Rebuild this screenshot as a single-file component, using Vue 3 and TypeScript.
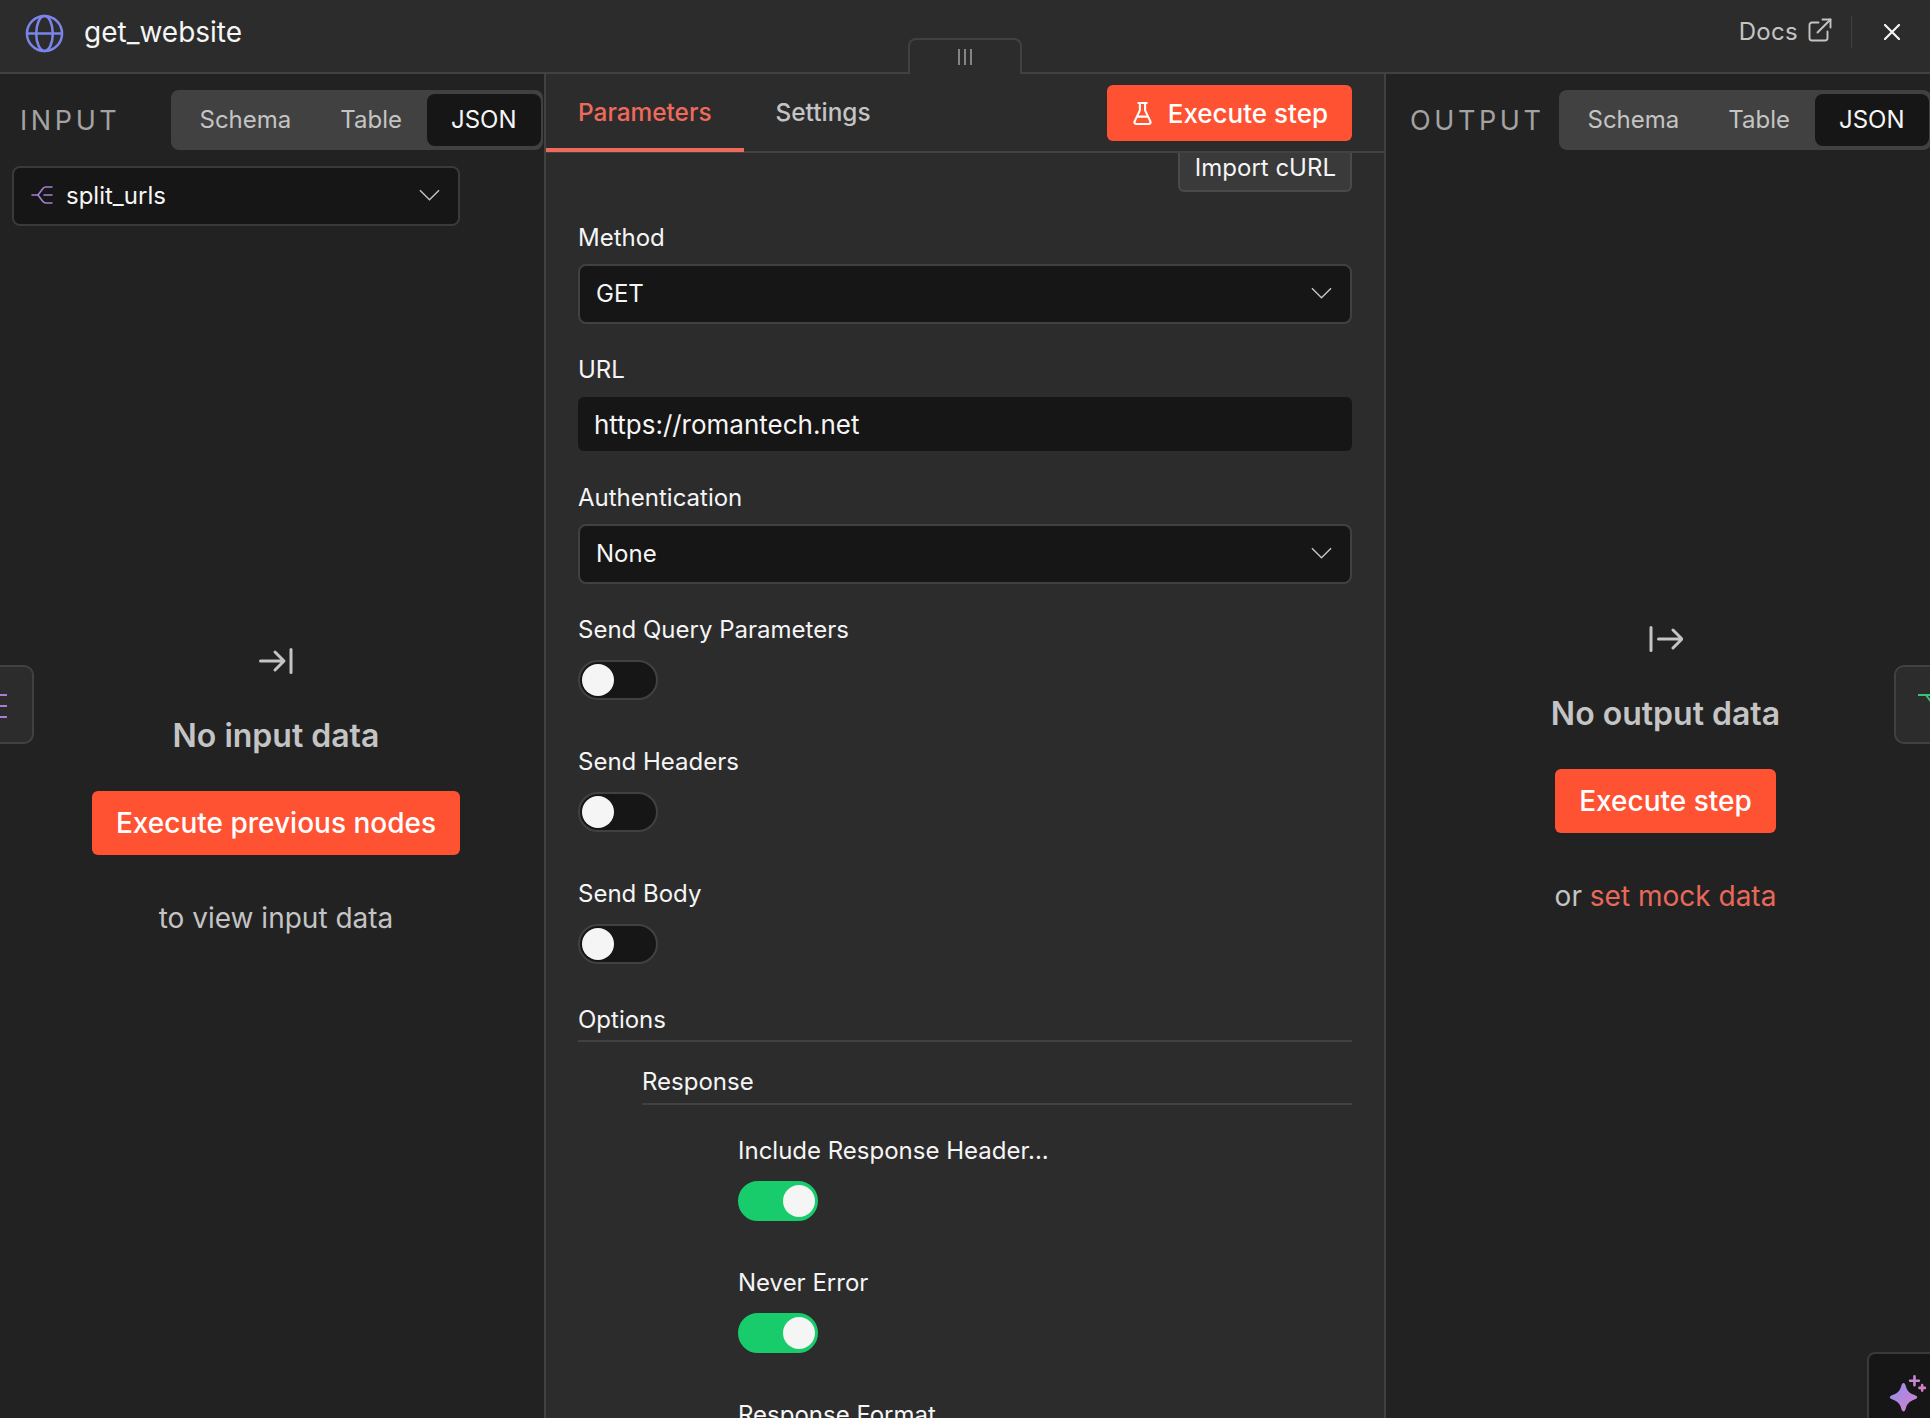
<script setup lang="ts">
const viewTabs = ['Schema', 'Table', 'JSON']

type Toggle = { label: string; on: boolean }

const topToggles: Toggle[] = [
  { label: 'Send Query Parameters', on: false },
  { label: 'Send Headers', on: false },
  { label: 'Send Body', on: false }
]

const responseToggles: Toggle[] = [
  { label: 'Include Response Header...', on: true },
  { label: 'Never Error', on: true }
]
</script>

<template>
  <div class="ndv">
    <header class="topbar">
      <svg class="globe" viewBox="0 0 40 40" fill="none" stroke="#7b84e8" stroke-width="2.6">
        <circle cx="20" cy="20" r="18" />
        <ellipse cx="20" cy="20" rx="8.5" ry="18" />
        <path d="M2 20h36" />
      </svg>
      <span class="node-name">get_website</span>
      <span class="docs">Docs</span>
      <svg class="external" viewBox="0 0 24 24" fill="none" stroke="#c4c4c4" stroke-width="1.9" stroke-linecap="round" stroke-linejoin="round">
        <path d="M10.5 4.5H4a2.5 2.5 0 0 0-2.500 2.500v13A2.500 2.500 0 0 0 4 22.500h13a2.500 2.500 0 0 0 2.500-2.500v-6.500" />
        <path d="M14.500 1.500h8v8" />
        <path d="M22.500 1.500 9.500 14.500" />
      </svg>
      <span class="divider"></span>
      <svg class="close" viewBox="0 0 16 16" fill="none" stroke="#f5f5f5" stroke-width="2.200" stroke-linecap="round">
        <path d="M1 1l14 14M15 1 1 15" />
      </svg>
    </header>

    <div class="handle">
      <svg viewBox="0 0 16 16" fill="none" stroke="#a3a3a3" stroke-width="1.500">
        <path d="M2 0v16M8 0v16M14 0v16" />
      </svg>
    </div>

    <main class="panels">
      <section class="side input">
        <div class="side-head">
          <span class="side-title">INPUT</span>
          <div class="view-tabs">
            <span v-for="tab in viewTabs" :key="tab" class="view-tab" :class="{ active: tab === 'JSON' }">{{ tab }}</span>
          </div>
        </div>
        <div class="node-select">
          <svg class="split-icon" viewBox="0 0 22 20" fill="none" stroke="#a77fd6" stroke-width="1.600" stroke-linecap="round" stroke-linejoin="round">
            <path d="M1 10h6" />
            <path d="M21 2h-6c-1.500 0-2.500.6-3.300 1.700L7 10l4.700 6.300c.8 1.100 1.800 1.700 3.300 1.700h6" />
            <path d="M13 10h8" />
          </svg>
          <span>split_urls</span>
          <svg class="chevron" viewBox="0 0 22 12" fill="none" stroke="#c4c4c4" stroke-width="1.500">
            <path d="M1 1l10 10L21 1" />
          </svg>
        </div>
        <div class="empty empty-input">
          <svg class="empty-icon" viewBox="0 0 34 26" fill="none" stroke="#c4c4c4" stroke-width="3" stroke-linecap="round" stroke-linejoin="round">
            <path d="M1.500 13h23M16 4l9 9-9 9" />
            <path d="M32 1.500v23" />
          </svg>
          <h2>No input data</h2>
          <button class="primary big">Execute previous nodes</button>
          <p>to view input data</p>
        </div>
      </section>

      <section class="center">
        <nav class="center-tabs">
          <span class="center-tab active">Parameters</span>
          <span class="center-tab">Settings</span>
          <button class="primary step">
            <svg class="flask" viewBox="0 0 18 22" fill="none" stroke="#fff" stroke-width="2" stroke-linejoin="round" stroke-linecap="round">
              <path d="M5 1h8M6.500 1v7L1.500 18.500A1.700 1.700 0 0 0 3 21h12a1.700 1.700 0 0 0 1.500-2.500L11.500 8V1" />
              <path d="M4 14h10" />
            </svg>
            Execute step
          </button>
        </nav>
        <div class="form">
          <div class="curl-row"><button class="curl">Import cURL</button></div>

          <label class="field-label method">Method</label>
          <div class="select">
            <span>GET</span>
            <svg class="chevron" viewBox="0 0 22 12" fill="none" stroke="#c4c4c4" stroke-width="1.500">
              <path d="M1 1l10 10L21 1" />
            </svg>
          </div>

          <label class="field-label">URL</label>
          <div class="text-input">https://romantech.net</div>

          <label class="field-label">Authentication</label>
          <div class="select">
            <span>None</span>
            <svg class="chevron" viewBox="0 0 22 12" fill="none" stroke="#c4c4c4" stroke-width="1.500">
              <path d="M1 1l10 10L21 1" />
            </svg>
          </div>

          <div v-for="item in topToggles" :key="item.label" class="toggle-field">
            <label class="field-label">{{ item.label }}</label>
            <span class="switch"><span class="knob"></span></span>
          </div>

          <div class="group-title options">Options</div>
          <div class="group-body">
            <div class="group-title sub">Response</div>
            <div class="inner">
              <div v-for="item in responseToggles" :key="item.label" class="toggle-field">
                <label class="field-label">{{ item.label }}</label>
                <span class="switch" :class="{ on: item.on }"><span class="knob"></span></span>
              </div>
              <label class="field-label">Response Format</label>
            </div>
          </div>
        </div>
      </section>

      <section class="side output">
        <div class="side-head">
          <span class="side-title">OUTPUT</span>
          <div class="view-tabs">
            <span v-for="tab in viewTabs" :key="tab" class="view-tab" :class="{ active: tab === 'JSON' }">{{ tab }}</span>
          </div>
        </div>
        <div class="empty empty-output">
          <svg class="empty-icon" viewBox="0 0 34 26" fill="none" stroke="#c4c4c4" stroke-width="3" stroke-linecap="round" stroke-linejoin="round">
            <path d="M2 1.500v23" />
            <path d="M9.500 13h23M24 4l9 9-9 9" />
          </svg>
          <h2>No output data</h2>
          <button class="primary big">Execute step</button>
          <p>or <span class="link">set mock data</span></p>
        </div>
      </section>
    </main>

    <div class="float-tab left-tab">
      <svg viewBox="0 0 8 26" fill="none" stroke="#a77fd6" stroke-width="2">
        <path d="M0 2h7M0 13h7M0 24h7" />
      </svg>
    </div>
    <div class="float-tab right-tab">
      <svg viewBox="0 0 14 14" fill="none" stroke="#35c27c" stroke-width="2">
        <path d="M0 2h14" />
        <path d="M8 2l6 8" />
      </svg>
    </div>

    <div class="ask-ai">
      <svg viewBox="0 0 42 42" width="46" height="46">
        <defs>
          <linearGradient id="spark" x1="0" y1="0" x2="1" y2="1">
            <stop offset="0" stop-color="#8f8ff5" />
            <stop offset="1" stop-color="#d77fc4" />
          </linearGradient>
        </defs>
        <path fill="url(#spark)" d="M16 10c1 0 1.500.8 2 2.500 1.200 4.500 3 6.500 8 8.500 1.500.6 2.500 1 2.500 2s-1 1.400-2.500 2c-5 2-6.800 4-8 8.500-.5 1.700-1 2.500-2 2.500s-1.500-.8-2-2.500c-1.200-4.500-3-6.500-8-8.500C4.500 24.400 3.500 24 3.500 23s1-1.400 2.500-2c5-2 6.800-4 8-8.500.5-1.700 1-2.500 2-2.500z" />
        <path stroke="#c985d6" stroke-width="2.400" stroke-linecap="round" d="M26 4v8M22 8h8" />
        <path stroke="#d37fc8" stroke-width="2.400" stroke-linecap="round" d="M33 12v5M30.500 14.500h5" />
      </svg>
    </div>
  </div>
</template>

<style>
html,
body {
  margin: 0;
  background: #222222;
  overflow: hidden;
}
</style>

<style scoped>
.ndv {
  position: relative;
  width: 1930px;
  height: 1418px;
  overflow: hidden;
  display: flex;
  flex-direction: column;
  font-family: Inter, "Liberation Sans", sans-serif;
  color: #f5f5f5;
  background: #222222;
}

.topbar {
  flex: none;
  display: flex;
  align-items: center;
  box-sizing: border-box;
  height: 74px;
  padding: 0 30px 9px 25px;
  background: #2c2c2c;
  border-bottom: 2px solid #414141;
}

.globe {
  width: 39px;
  height: 39px;
  margin-top: 3px;
}

.node-name {
  margin-left: 20px;
  font-size: 28px;
  flex: 1;
}

.docs {
  font-size: 24px;
  letter-spacing: 0.3px;
  color: #c4c4c4;
}

.external {
  width: 24px;
  height: 24px;
  margin-left: 10px;
  margin-bottom: 3px;
}

.divider {
  width: 1px;
  height: 32px;
  margin: 0 32px 0 19px;
  background: #414141;
}

.close {
  width: 16px;
  height: 16px;
}

.handle {
  position: absolute;
  left: 908px;
  top: 38px;
  width: 114px;
  height: 36px;
  box-sizing: border-box;
  display: flex;
  align-items: center;
  justify-content: center;
  background: #2c2c2c;
  border: 2px solid #414141;
  border-bottom: none;
  border-radius: 8px 8px 0 0;
}

.handle svg {
  width: 16px;
  height: 16px;
}

.panels {
  flex: 1;
  display: flex;
  min-height: 0;
}

.side {
  background: #222222;
  min-width: 0;
}

.input {
  width: 544px;
  flex: none;
}

.output {
  flex: 1;
}

.side-head {
  display: flex;
  align-items: center;
  justify-content: space-between;
  height: 60px;
  margin-top: 16px;
  padding-left: 20px;
}

.input .side-head {
  padding-right: 1px;
}

.output .side-head {
  width: 545px;
  box-sizing: border-box;
  padding-left: 24px;
}

.side-title {
  font-size: 27px;
  letter-spacing: 3.6px;
  color: #a3a3a3;
}

.view-tabs {
  display: flex;
  box-sizing: border-box;
  width: 372px;
  height: 60px;
  padding: 4px;
  background: #414141;
  border-radius: 8px;
}

.view-tab {
  display: flex;
  align-items: center;
  justify-content: center;
  padding: 0 24.500px 2px;
  font-size: 24px;
  color: #c4c4c4;
  border-radius: 8px;
}

.view-tab.active {
  background: #161616;
  color: #f5f5f5;
}

.node-select {
  display: flex;
  align-items: center;
  box-sizing: border-box;
  width: 448px;
  height: 60px;
  margin: 16px 0 0 12px;
  padding: 0 18px 2px 17px;
  background: #161616;
  border: 2px solid #3a3a3a;
  border-radius: 8px;
  font-size: 24px;
}

.split-icon {
  width: 22px;
  height: 20px;
  margin-right: 13px;
}

.chevron {
  width: 21px;
  height: 12px;
  margin-left: auto;
}

.empty {
  display: flex;
  flex-direction: column;
  align-items: center;
}

.empty-input {
  padding-top: 422px;
  width: 552px;
}

.empty-output {
  padding-top: 476px;
  width: 559px;
}

.empty-icon {
  width: 34px;
  height: 26px;
}

.empty h2 {
  margin: 41px 0 0;
  font-size: 32px;
  line-height: 42px;
  font-weight: 600;
  color: #c4c4c4;
}

.primary {
  border: none;
  background: #ff5233;
  color: #fff;
  font-family: inherit;
  border-radius: 6px;
}

.big {
  height: 64px;
  margin-top: 34px;
  padding: 0 24px;
  font-size: 28px;
  font-weight: 500;
}

.empty p {
  margin: 43px 0 0;
  font-size: 28px;
  line-height: 40px;
  color: #c4c4c4;
}

.link {
  color: #e8695a;
}

.center {
  width: 842px;
  flex: none;
  box-sizing: border-box;
  background: #2c2c2c;
  border-left: 2px solid #414141;
  border-right: 2px solid #414141;
  overflow: hidden;
}

.center-tabs {
  display: flex;
  align-items: flex-start;
  box-sizing: border-box;
  height: 79px;
  border-bottom: 2px solid #414141;
}

.center-tab {
  height: 78px;
  box-sizing: border-box;
  padding: 21px 32px 0;
  font-size: 24.400px;
  line-height: 34px;
  font-weight: 500;
  color: #c4c4c4;
}

.center-tab.active {
  color: #ee6a5b;
  border-bottom: 4px solid #ee6a5b;
}

.step {
  display: flex;
  align-items: center;
  gap: 16px;
  height: 56px;
  margin: 11px 32px 0 auto;
  padding: 0 24px 0 26px;
  font-size: 26px;
  font-weight: 500;
}

.flask {
  width: 19px;
  height: 23px;
}

.form {
  padding: 0 32px;
}

.curl-row {
  display: flex;
  justify-content: flex-end;
}

.curl {
  height: 39px;
  padding: 0 14px 8px 15px;
  font-family: inherit;
  font-size: 24px;
  color: #f5f5f5;
  background: #3a3a3a;
  border: 2px solid #4a4a4a;
  border-top: none;
  border-radius: 0 0 6px 6px;
}

.field-label {
  display: block;
  font-size: 24px;
  line-height: 32px;
  color: #f5f5f5;
}

.method {
  margin-top: 30px;
}

.select {
  display: flex;
  align-items: center;
  box-sizing: border-box;
  height: 60px;
  margin: 10px 0 30px;
  padding: 0 18px 2px 16px;
  background: #161616;
  border: 2px solid #414141;
  border-radius: 8px;
  font-size: 24px;
}

.text-input {
  display: flex;
  align-items: center;
  box-sizing: border-box;
  height: 54px;
  margin: 11px 0 31px;
  padding: 0 16px;
  background: #161616;
  border-radius: 6px;
  font-size: 26px;
}

.toggle-field {
  margin-bottom: 46px;
}

.switch {
  display: block;
  position: relative;
  box-sizing: border-box;
  width: 80px;
  height: 40px;
  margin-top: 14px;
  background: #161616;
  border: 2px solid #414141;
  border-radius: 20px;
}

.knob {
  position: absolute;
  top: 2px;
  left: 2px;
  width: 32px;
  height: 32px;
  border-radius: 50%;
  background: #f5f5f5;
}

.switch.on {
  background: #18cc6c;
  border-color: #18cc6c;
}

.switch.on .knob {
  left: auto;
  right: 1px;
}

.group-title {
  font-size: 24px;
  line-height: 32px;
  padding-bottom: 4px;
  border-bottom: 2px solid #414141;
}

.options {
  margin-top: -6px;
}

.group-body {
  padding-left: 64px;
}

.sub {
  margin-top: 24px;
  padding-bottom: 5px;
}

.inner {
  padding: 30px 0 0 96px;
}

.float-tab {
  position: absolute;
  top: 665px;
  height: 79px;
  box-sizing: border-box;
  background: #2c2c2c;
  border: 2px solid #414141;
  overflow: hidden;
}

.left-tab {
  left: -2px;
  width: 36px;
  border-radius: 0 10px 10px 0;
}

.left-tab svg {
  position: absolute;
  left: 0;
  top: 26px;
  width: 8px;
  height: 26px;
}

.right-tab {
  left: 1894px;
  width: 40px;
  border-radius: 10px 0 0 10px;
}

.right-tab svg {
  position: absolute;
  left: 22px;
  top: 26px;
  width: 14px;
  height: 14px;
}

.ask-ai {
  position: absolute;
  left: 1867px;
  top: 1352px;
  width: 70px;
  height: 70px;
  box-sizing: border-box;
  padding: 18px 0 0 17px;
  background: #161616;
  border: 2px solid #3a3a3a;
  border-radius: 8px 0 0 0;
}
</style>
